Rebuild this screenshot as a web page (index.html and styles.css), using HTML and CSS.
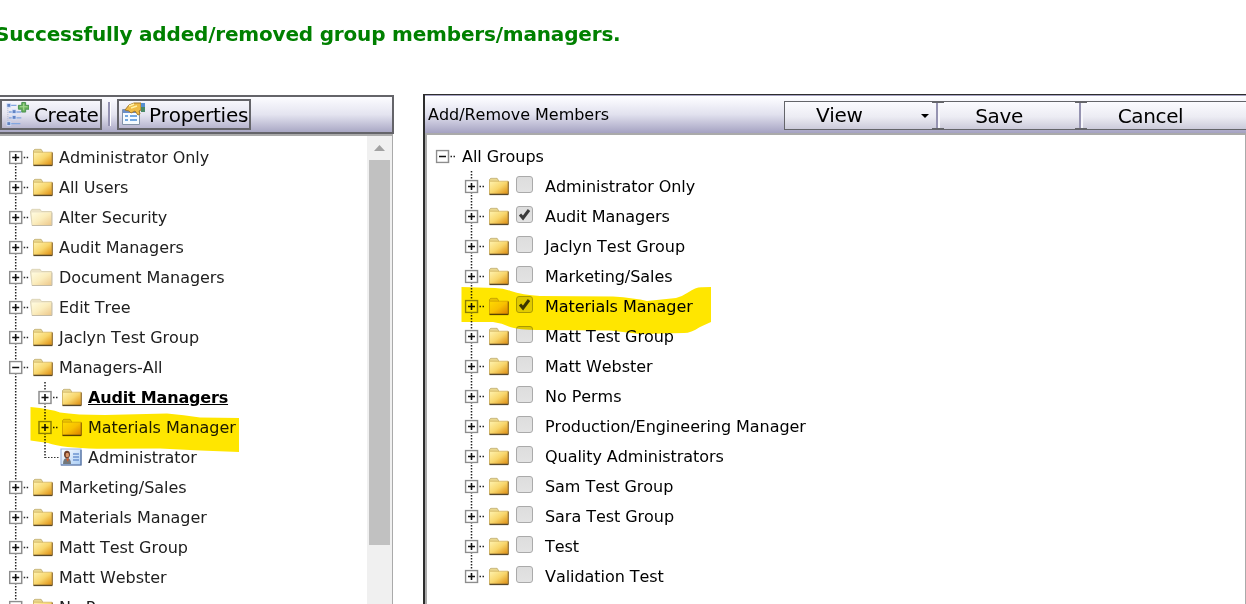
FILE: index.html
```html
<!DOCTYPE html>
<html lang="en">
<head>
<meta charset="utf-8">
<title>Group Members</title>
<link rel="stylesheet" href="styles.css">
</head>
<body>
<svg class="defs" width="0" height="0" aria-hidden="true">
  <defs>
    <linearGradient id="gold" x1="0" y1="0" x2="1" y2="1"><stop offset="0" stop-color="#fff3b0"/><stop offset=".5" stop-color="#f8d66c"/><stop offset="1" stop-color="#dc8a0c"/></linearGradient>
    <linearGradient id="soft" x1="0" y1="0" x2="1" y2="1"><stop offset="0" stop-color="#fffbe0"/><stop offset=".5" stop-color="#fbedbd"/><stop offset="1" stop-color="#edc88b"/></linearGradient>
    <linearGradient id="card" x1="0" y1="0" x2="1" y2="1"><stop offset="0" stop-color="#fff"/><stop offset="1" stop-color="#a9cdf5"/></linearGradient>
    <symbol id="plus" viewBox="0 0 20 14"><path d="M1 1h12v12H1z" fill="#fff" stroke="#8d8d8d" stroke-width="1.5"/><path d="M3.500 7h7M7 3.500v7" stroke="#111" stroke-width="1.600"/><path d="M15 7h1.500M18 7h1.500" stroke="#222" stroke-width="1.400"/></symbol>
    <symbol id="minus" viewBox="0 0 20 14"><path d="M1 1h12v12H1z" fill="#fff" stroke="#8d8d8d" stroke-width="1.5"/><path d="M3.500 7h7" stroke="#111" stroke-width="1.600"/><path d="M15 7h1.500M18 7h1.500" stroke="#222" stroke-width="1.400"/></symbol>
    <symbol id="folder" viewBox="0 0 20 18"><path d="M.5 16.500V2L2 .7h6L9.500 3v2H.5" fill="#ead88f" stroke="#b9a66a" stroke-width=".8"/><path d="M.5 3.700h18.500v13H.5z" fill="url(#gold)" stroke="#cfae58" stroke-width=".7"/><path d="M.5 17h18.800" stroke="#57482b" stroke-width="1.400"/><path d="M19.300 17V4" stroke="#876327" stroke-width="1"/></symbol>
    <symbol id="pale" viewBox="0 0 23 18"><path d="M2 16.500L.5 3 2 .7h8l1.500 2.300h10V17H2z" fill="#ece3c8" stroke="#d5cba9" stroke-width=".8"/><path d="M1.500 4h20v12.500h-19z" fill="url(#soft)"/><path d="M2 17h20V4" fill="none" stroke="#c3bba7"/></symbol>
    <symbol id="person" viewBox="0 0 22 18"><path d="M1 1h20v16H1z" fill="url(#card)" stroke="#9eb6df" stroke-width="1.200"/><path d="M1 17h20V2" fill="none" stroke="#526f9d" stroke-width="1.200"/><path d="M3 16q0-6 4-6t4 6z" fill="#71777b"/><ellipse cx="7" cy="6.500" rx="3" ry="3.700" fill="#6d3d29"/><ellipse cx="7.300" cy="7" rx="1.700" ry="2.300" fill="#dc986b"/><path d="M6 11l2 3 1-4" fill="#d65a27"/><path d="M13 6h6M13 9h6M13 12h6" stroke="#6d94cf" stroke-width="1.300"/></symbol>
  </defs>
</svg>
<p class="message">Successfully added/removed group members/managers.</p>
<main class="panels">
  <section class="groups">
    <header class="bar">
      <button class="tool create"><svg width="25" height="26" viewBox="0 0 26 26"><path d="M4 4h9M5 11h13M5 17h13M4 23h13" stroke="#83a6df" stroke-width="1.500"/><path d="M4 3v22" stroke="#aeb4d0" stroke-dasharray="1 1"/><path d="M3 2h4v4H3zM8.500 8.500h4v4h-4zM8.500 14.500h4v4h-4zM3 21h4v4H3z" fill="#6283c3" stroke="#dce9ff" stroke-width=".8"/><path d="M18.500 1h4v3h3.500v4h-3.500v3h-4V8H15V4h3.500z" fill="#68b25a" stroke="#4a9150"/><path d="M20.500 2v7M16.500 5.500h8" stroke="#a8d993" stroke-width="1.200"/></svg><span>Create</span></button>
      <i class="divider"></i>
      <button class="tool properties"><svg width="26" height="26" viewBox="0 0 26 26"><path d="M2.500 8.500h17v15h-17z" fill="#f5fbff" stroke="#8292a8"/><path d="M3 9h16v3H3z" fill="#6a8fca"/><path d="M5 15h3M5 19h3M10 15h7M10 19h7" stroke="#73a8e1" stroke-width="1.800"/><path d="M5 9l4-5 5-2h7v7l-2 1 1 3-2 1-3-4-4 2-2-2z" fill="#efbb45" stroke="#a57a2b"/><path d="M9 5l5-2M11 7l6-2" stroke="#fff1a5" stroke-width="1.500"/><path d="M21 2h4v9h-4z" fill="#4a8965"/><path d="M21 2h4v4h-4z" fill="#558ed0"/></svg><span>Properties</span></button>
    </header>
    <div class="groups-body">
      <div class="tree" id="left-tree"></div>
      <div class="scroll"><svg width="11" height="6"><path d="M0 6L5.500 0 11 6z" fill="#a2a2a2"/></svg><i></i></div>
    </div>
  </section>
  <section class="members">
    <header class="bar">
      <h1>Add/Remove Members</h1>
      <div class="actions"><button class="view">View<svg width="8" height="4"><path d="M0 0h8L4 4z"/></svg></button><i></i><button class="save">Save</button><i></i><button>Cancel</button></div>
    </header>
    <div class="tree" id="right-tree"></div>
  </section>
</main>
<svg class="marker" width="1246" height="604" aria-hidden="true"><path d="M30.500 407Q51 409 60 412.500Q76 415 105 415L167 413.500Q184 415 200 417.500L239 418V452L200 450.500L160 448.500L97 448.700Q63 448 48 443L30.500 440.500Z"/><path d="M461.500 287L495 288Q503 288 510 290.700Q523 295 540 296L613 296.500Q635 298 647 301L676 298Q683 296 688 292.500Q696 287 702 287.300L711 287V322L700 327Q691 333 684 333L640 334L610 330.500L537 330Q519 330 510 327Q502 323 493 322L461.500 322Z"/></svg>
<script src="tree.js"></script>
</body>
</html>
```
FILE: styles.css
```css
* { box-sizing: border-box; }
body { margin: 0; width: 1246px; height: 604px; overflow: hidden; background: #fff; color: #000; font: 16px "DejaVu Sans", Verdana, sans-serif; font-kerning: none; position: relative; }
.defs { position: absolute; }
.message { margin: 0 0 0 -5px; height: 94px; padding-top: 21px; font-size: 20px; line-height: 26px; font-weight: bold; color: #008000; white-space: nowrap; letter-spacing: -.18px; }
button { font: inherit; font-kerning: none; color: inherit; margin: 0; padding: 0; border: 0; background: none; }
.panels { display: flex; height: 510px; gap: 29px; }
.groups { width: 394px; padding-top: 1px; }
.groups .bar { height: 39px; display: flex; align-items: center; border: 2px solid #646469; border-left: 0; padding-bottom: 1px; background: linear-gradient(#fcfcff, #e4e4f0 50%, #aaa8c5); }
.tool { height: 31px; border: 2px solid #646469; display: flex; align-items: center; gap: 4px; font-size: 20px; white-space: nowrap; flex: none; }
.tool span { padding-top: 1px; }
.create { width: 102px; padding-left: 2px; gap: 5px; letter-spacing: -.4px; }
.properties { width: 134px; padding-left: 1px; gap: 3px; letter-spacing: -.28px; }
.divider { width: 3px; height: 24px; background: #9391b1; border-right: 1px solid #fff; margin: 0 6px; }
.groups-body { height: 470px; border-top: 2px solid #aaa; border-right: 1px solid #aaa; width: 393px; display: flex; justify-content: space-between; }
.tree { color: #202020; }
#left-tree { padding-top: 6px; }
.row { height: 30px; display: flex; align-items: center; white-space: nowrap; }
.row svg { flex: none; }
.label { line-height: 24px; padding-top: 2px; letter-spacing: -.05px; }
.selected { font-weight: bold; text-decoration: underline; color: #000; letter-spacing: -.18px; }
.scroll { width: 25px; background: #f0f0f0; display: flex; flex-direction: column; align-items: center; padding-top: 9px; }
.scroll i { width: 21px; height: 385px; margin-top: 9px; background: #c1c1c1; }
.members { width: 823px; border-top: 1px solid #2d2d2d; border-left: 2px solid #2d2d2d; }
.members .bar { height: 38px; border-top: 1px solid #a5a2c2; display: flex; background: linear-gradient(#fff, #fafafe 3px, #e1e1ee 50%, #a5a2c2); }
h1 { font-size: 16px; font-weight: normal; margin: 0; line-height: 37px; width: 359px; padding-left: 3px; letter-spacing: -.03px; }
.actions { height: 29px; margin-top: 5px; width: 462px; display: flex; border: 1px solid #64656a; border-right: 0; background: linear-gradient(#fbfbff, #ececf3 55%, #cbcada); }
.actions button { width: 131px; font-size: 20px; line-height: 29px; padding-right: 6px; letter-spacing: -.35px; flex: none; }
.actions .view { width: 147px; display: flex; align-items: center; justify-content: space-between; padding-left: 31px; padding-right: 3px; }
.actions .save { padding-right: 21px; }
.actions button:last-child { width: 143px; padding-right: 16px; }
.actions i { width: 12px; flex: none; background: linear-gradient(#64656a 0 1px, transparent 1px 26px, #64656a 26px), linear-gradient(90deg, transparent 4px, #9593b1 4px 6px, #f7f7fb 6px 8px, transparent 8px); }
#right-tree { height: 471px; border-top: 2px solid #aaa; border-left: 2px solid #aaa; border-right: 1px solid #aaa; padding-top: 6px; color: #000; }
#right-tree .label { padding-left: 1px; }
.check { appearance: none; width: 17px; height: 17px; margin: 0 11px 3px 7px; border: 1px solid #aaa; border-radius: 3px; background: linear-gradient(#ddd, #e3e3e3); display: grid; place-items: center; }
.marker { position: absolute; left: 0; top: 0; pointer-events: none; mix-blend-mode: multiply; fill: #ffe600; }
```
FILE: tree.js
```javascript
const icon = (name, x, y, w, h) => `<svg x="${x}" y="${y}" width="${w}" height="${h}"><use href="#${name}"/></svg>`;
const dots = (x, from, to) => `<path d="M${x} ${from}V${to}" stroke="#222" stroke-width="1.5" stroke-dasharray="1.5 1.5"/>`;

function add(tree, label, svg, width, control = "", cls = "") {
  const row = document.createElement("div");
  row.className = "row";
  row.innerHTML = `<svg width="${width}" height="30" viewBox="0 0 ${width} 30">${svg}</svg>${control}<span class="label ${cls}">${label}</span>`;
  tree.append(row);
}

const left = document.getElementById("left-tree");
[["Administrator Only"], ["All Users"], ["Alter Security", "pale"], ["Audit Managers"], ["Document Managers", "pale"], ["Edit Tree", "pale"], ["Jaclyn Test Group"], ["Managers-All", "open"], ["Audit Managers", "child"], ["Materials Manager", "child"], ["Administrator", "person"], ["Marketing/Sales"], ["Materials Manager"], ["Matt Test Group"], ["Matt Webster"], ["No Perms"]].forEach(([label, kind = "folder"], index) => {
  const nested = kind === "child" || kind === "person";
  let svg = dots(15.7, index ? 0 : 15, 30);
  if (kind === "person") svg += dots(45, 0, 16) + '<path d="M45 15.5H59" stroke="#333" stroke-dasharray="1.5 1.5"/>' + icon("person", 60, 6, 22, 18);
  else {
    if (nested) svg += dots(45, 0, 30);
    svg += icon(kind === "open" ? "minus" : "plus", nested ? 38 : 8.7, 8.5, 20, 14);
    svg += kind === "pale" ? icon("pale", 30, 6.5, 23, 18) : icon("folder", nested ? 62 : 33, 6.5, 20, 18);
  }
  add(left, label, svg, nested ? 88 : 59, "", kind === "child" && label === "Audit Managers" ? "selected" : "");
});

const right = document.getElementById("right-tree");
add(right, "All Groups", icon("minus", 8.5, 8.5, 20, 14), 34);
["Administrator Only", "Audit Managers", "Jaclyn Test Group", "Marketing/Sales", "Materials Manager", "Matt Test Group", "Matt Webster", "No Perms", "Production/Engineering Manager", "Quality Administrators", "Sam Test Group", "Sara Test Group", "Test", "Validation Test"].forEach((label, index) => {
  const checked = index === 1 || index === 4;
  const control = `<span class="check">${checked ? '<svg width="13" height="13"><path d="M2 6.5L5 10L11 2" fill="none" stroke="#3b3b3b" stroke-width="3"/></svg>' : ""}</span>`;
  add(right, label, dots(44.5, 0, index === 13 ? 15 : 30) + icon("plus", 37.5, 8.5, 20, 14) + icon("folder", 62, 6.5, 20, 18), 82, control);
});
```
